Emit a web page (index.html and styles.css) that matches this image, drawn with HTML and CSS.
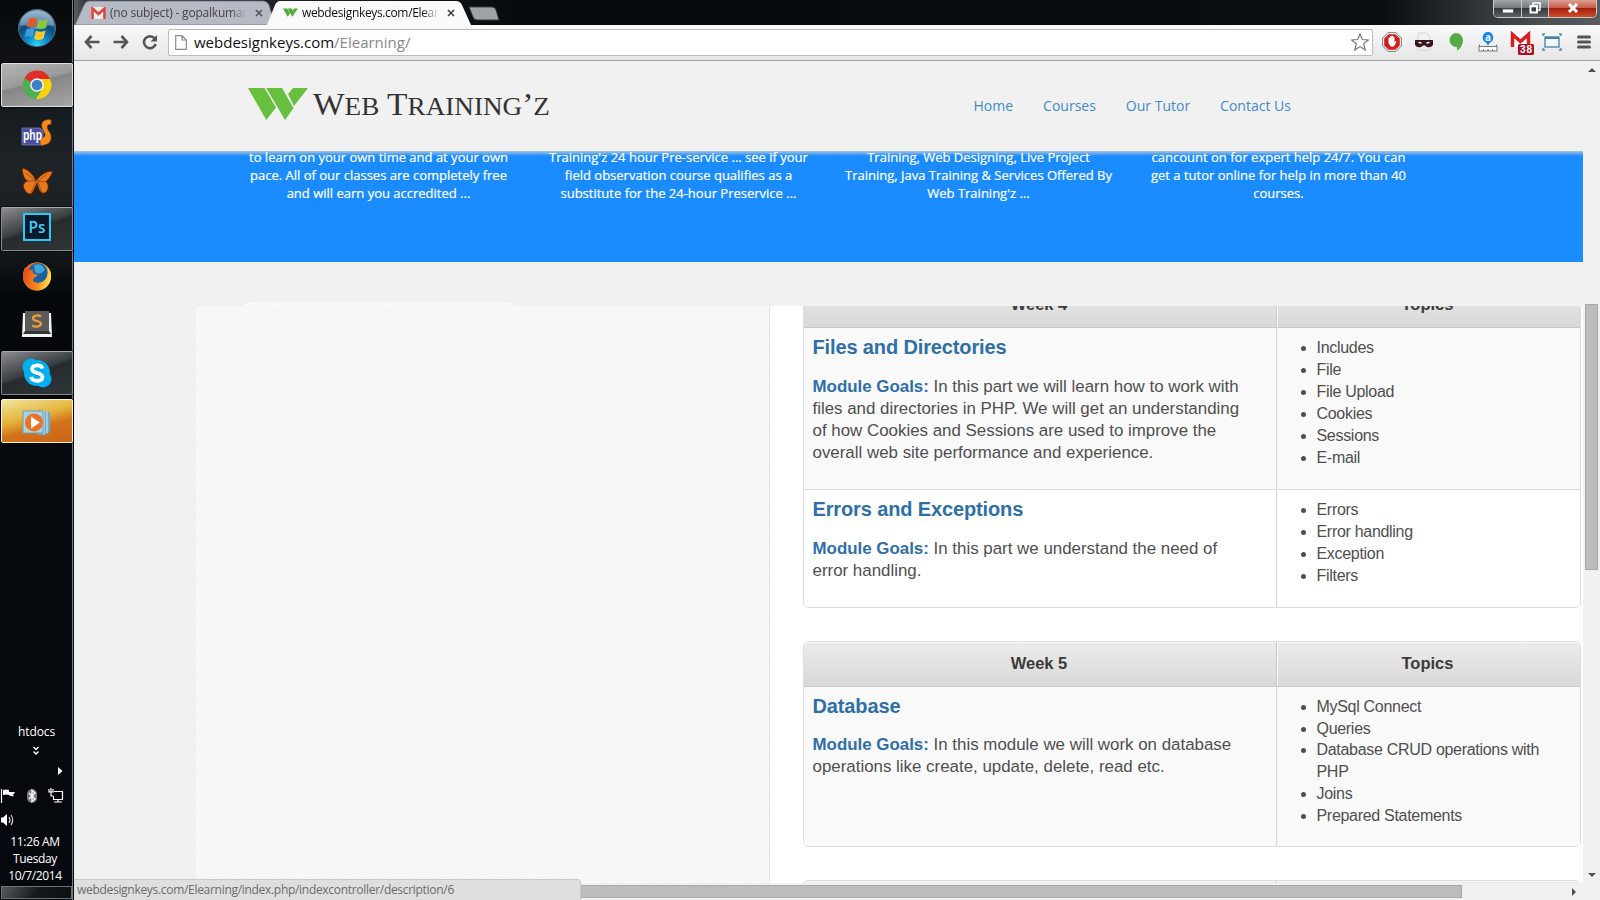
FILE: index.html
```html
<!DOCTYPE html>
<html lang="en">
<head>
<meta charset="utf-8">
<title>webdesignkeys.com/Elearning</title>
<link rel="stylesheet" href="styles.css">
</head>
<body>
<div class="desktop">
  <aside class="taskbar">
    <div class="start">
      <svg width="40" height="40" viewBox="0 0 40 40">
        <defs>
          <radialGradient id="orb" cx=".5" cy="1" r=".95"><stop offset="0" stop-color="#2fe0ff"/><stop offset=".3" stop-color="#0b8fd0"/><stop offset=".65" stop-color="#0d4a7a"/><stop offset="1" stop-color="#7fa0b8"/></radialGradient>
        </defs>
        <circle cx="20" cy="20" r="18.500" fill="url(#orb)" stroke="#4d6f86" stroke-width="1"/>
        <path d="M3 18C4 8 11 3 20 3s16 5 17 15c-8-3-13 4-19 3S8 15 3 18z" fill="#b9d3e3" opacity=".45"/>
        <path d="M12 11q4-3 8 0l-2 8.500q-4-2-8 0z" fill="#e9562a"/>
        <path d="M21.500 11.500q5 2.500 9.500-.5l-2 9q-5 2-9.500 0z" fill="#8cc63e"/>
        <path d="M9.500 21.500q4-2.500 8 0l-2 8q-4-2.500-8 0z" fill="#3d9de0"/>
        <path d="M19 22.500q4 2.500 9.500 0l-2 8q-5 3-9.500 0z" fill="#fcc62c"/>
      </svg>
    </div>
    <ul class="apps">
      <li class="app app-open app-active">
        <svg width="30" height="30" viewBox="0 0 30 30">
          <circle cx="15" cy="15" r="14" fill="#4caf50"/>
          <path d="M15 15 2.500 8.500A14 14 0 0 1 28 9H15z" fill="#e12d27"/>
          <path d="M15 9h13A14 14 0 0 1 14 29l7-11z" fill="#fdd20a"/>
          <circle cx="15" cy="15" r="6.800" fill="#eef3f8"/><circle cx="15" cy="15" r="5.300" fill="#3b7fcb"/>
        </svg>
      </li>
      <li class="app">
        <svg width="32" height="30" viewBox="0 0 32 30">
          <path d="M1 10h18l3 3v14H1z" fill="#4a4fa3" stroke="#8286c4" stroke-width=".7"/>
          <path d="M30 2c-7-1-10 2-9 7 1 4 4 6 3 9-1 2-3 3-5 3l1 6c6 0 10-2 10-8 0-5-4-6-4-10 0-2 2-3 4-3z" fill="#f58a1c" stroke="#c95d0a" stroke-width=".6"/>
          <text x="2" y="22" class="php-label" textLength="19" lengthAdjust="spacingAndGlyphs">php</text>
        </svg>
      </li>
      <li class="app">
        <svg width="34" height="30" viewBox="0 0 34 30">
          <path d="M16 14C13 7 7 3 2 1.500c0 6 1 11 5 13.500-3 1-5 4-3.500 7C5 26 8 29 11.500 28c2.500-2 3.500-6 5.500-10 1 4 2 9 6 9.500 4 0 5.500-4 5.500-7.500 0-2-1-3-2-4.500C29.500 13 32 9 33 5c-6-.5-12 3-17 9z" fill="#e87a1d" stroke="#4a2108" stroke-width="1.300"/>
          <path d="M7 15l9 0 11 1M16 16l-5 11M18 16l4 11M16 15 6 7M18 15l9-7" stroke="#8a4210" fill="none" stroke-width=".7"/>
        </svg>
      </li>
      <li class="app app-open app-ps">
        <svg width="28" height="28" viewBox="0 0 28 28">
          <rect x="1" y="1" width="26" height="26" fill="#0a1a2c" stroke="#26c9f7" stroke-width="2"/>
          <text x="5.500" y="20" class="ps-label" textLength="17" lengthAdjust="spacingAndGlyphs">Ps</text>
        </svg>
      </li>
      <li class="app">
        <svg width="30" height="30" viewBox="0 0 30 30">
          <defs><linearGradient id="fox" x1="0" x2="1" y1=".2" y2=".4"><stop offset="0" stop-color="#e8491d"/><stop offset=".6" stop-color="#f28a1e"/><stop offset="1" stop-color="#fde04c"/></linearGradient></defs>
          <circle cx="15" cy="14.500" r="14" fill="#f28a1e"/>
          <circle cx="15" cy="14.500" r="14" fill="url(#fox)"/>
          <circle cx="16" cy="11" r="10" fill="#1d5f9f"/>
          <path d="M12 3q8-3 11 5-5 6-10 2z" fill="#3ba6dc"/>
          <path d="M3 5l2 4q3-2 6-1-1 3 2 4l3 1-4 3q-2 2 0 4 6 3 11-2 5-7 1-14 6 4 5 12-2 9-12 11Q3 27 1 16 1 9 3 5z" fill="url(#fox)"/>
        </svg>
      </li>
      <li class="app app-sublime">
        <svg width="32" height="30" viewBox="0 0 32 30">
          <path d="M2 4h28l1 24H1z" fill="#f3f3f3"/><path d="M4 2h24v20H4z" fill="#5b5b5b"/><path d="M4 22h24l2 3H2z" fill="#343434"/>
          <path d="M20 7.500c-3-2-8-1-8 2s8 2 8 5-5 4-9 2" fill="none" stroke="#f09a3a" stroke-width="2.300"/>
        </svg>
      </li>
      <li class="app app-open">
        <svg width="32" height="32" viewBox="0 0 32 32">
          <circle cx="10" cy="10" r="8.500" fill="#00aff0"/><circle cx="22" cy="22" r="8.500" fill="#00aff0"/><circle cx="16" cy="16" r="13" fill="#00aff0"/>
          <path d="M21.500 11.500C20 7 11 7.500 11 12c0 5 10.500 3 10.500 8 0 5-10 5-11.500 0" fill="none" stroke="#fff" stroke-width="3.800"/>
        </svg>
      </li>
      <li class="app app-open app-alert">
        <svg width="32" height="30" viewBox="0 0 32 30">
          <path d="M17 2l12 2v20l-5 3H17z" fill="#6fa9c5"/><path d="M26 3v22M23 3v23" stroke="#d8eef7"/>
          <path d="M2 3h20v22H2z" fill="#a9d2e4" stroke="#6ca1bb"/>
          <circle cx="13" cy="14.500" r="9" fill="#f06f20"/><path d="M10 8.500v12l9-6z" fill="#fff"/>
        </svg>
      </li>
    </ul>
    <div class="tray">
      <div class="tray-label">htdocs</div>
      <svg class="tray-more" width="8" height="10" viewBox="0 0 8 10"><path d="M1.500 1 4 3.500 6.500 1M1.500 5.500 4 8l2.500-2.500" fill="none" stroke="#fff" stroke-width="1.400"/></svg>
      <svg class="tray-arrow" width="5" height="8" viewBox="0 0 5 8"><path d="M0 0v8l4.500-4z" fill="#fff"/></svg>
      <div class="tray-icons">
        <svg width="16" height="16" viewBox="0 0 16 16"><path d="M1.500 1v14" stroke="#fff" stroke-width="1.200"/><path d="M3 2q3-1 6 0v2h6l-2 3 1 1q-3 1-5-1-2-1-6 0z" fill="#fff"/></svg>
        <svg width="12" height="16" viewBox="0 0 12 16"><rect x="1" y="1" width="10" height="14" rx="5" fill="#77797b"/><path d="M3 5l6 6-3 2.500V2.500L9 5l-6 6" fill="none" stroke="#fff" stroke-width="1.300"/></svg>
        <svg width="16" height="16" viewBox="0 0 16 16"><path d="M6 3.500h8.500v8H5.500V8M6 14h8M10 12v2M1 1v3h4V1M3 0v8h2" fill="none" stroke="#fff" stroke-width="1.200"/></svg>
      </div>
      <svg class="tray-sound" width="16" height="14" viewBox="0 0 16 14"><path d="M1 4.500h2L7 1v12L3 9.500H1z" fill="#fff"/><path d="M9 4q2 3 0 6M11 2q3.500 5 0 10" fill="none" stroke="#d5d8da" stroke-width="1.200"/></svg>
      <div class="clock"><div>11:26 AM</div><div>Tuesday</div><div>10/7/2014</div></div>
    </div>
    <div class="show-desktop"></div>
  </aside>

  <main class="browser">
    <header class="tabstrip">
      <div class="tab tab-back">
        <svg class="tab-shape" width="200" height="25" viewBox="0 0 200 25"><path d="M0 25 9 5q2-4 5-4h174q4 0 6 4l6 20z" fill="#b5bac4" stroke="#6e737c" stroke-width=".8"/></svg>
        <svg class="tab-icon" width="15" height="12" viewBox="0 0 15 12"><rect width="15" height="12" fill="#f1e9e8"/><path d="M1.500 12V1.500l6 5.500 6-5.500V12" fill="none" stroke="#d9473c" stroke-width="2.600"/></svg>
        <span class="tab-title title-mail">(no subject) - gopalkumar</span>
        <svg class="tab-close" width="8" height="8" viewBox="0 0 8 8"><path d="M1 1l6 6M7 1 1 7" stroke="#555" stroke-width="1.700"/></svg>
      </div>
      <div class="tab tab-front">
        <svg class="tab-shape" width="204" height="25" viewBox="0 0 204 25"><path d="M0 25 8 5q2-4 5-4h176q4 0 6 4l9 20z" fill="#fafafa"/></svg>
        <svg class="tab-icon" width="15" height="9" viewBox="0 0 60 33"><path d="M0 0h17l11 19-9 14zM19 0h16l11 20-9 13zM40 6l4-6h16L46 19z" fill="#4cae33"/></svg>
        <span class="tab-title title-site">webdesignkeys.com/Elearning</span>
        <svg class="tab-close" width="8" height="8" viewBox="0 0 8 8"><path d="M1 1l6 6M7 1 1 7" stroke="#444" stroke-width="1.700"/></svg>
      </div>
      <svg class="new-tab" width="32" height="15" viewBox="0 0 32 15"><path d="M1 1h23q3 0 4 3l3 10H9q-3 0-4-3z" fill="#9fa2a6" stroke="#3a3d40"/></svg>
      <div class="window-buttons">
        <span class="wb wb-min"><svg width="12" height="6" viewBox="0 0 12 6"><rect x=".5" y="1" width="11" height="4" fill="#fff" stroke="#555b63"/></svg></span>
        <span class="wb wb-max"><svg width="12" height="12" viewBox="0 0 12 12"><path d="M4 3V1h7v7H9" fill="none" stroke="#fff" stroke-width="1.500"/><rect x="1.500" y="4" width="6.500" height="6.500" fill="none" stroke="#fff" stroke-width="2"/></svg></span>
        <span class="wb wb-close"><svg width="12" height="10" viewBox="0 0 12 10"><path d="M2 1l8 8M10 1 2 9" stroke="#fff" stroke-width="3"/></svg></span>
      </div>
    </header>

    <nav class="toolbar">
      <svg class="nav-icon" width="16" height="14" viewBox="0 0 16 14"><path d="M7.500 1 2 7l5.500 6M2 7h13.500" fill="none" stroke="#555" stroke-width="2.600"/></svg>
      <svg class="nav-icon" width="16" height="14" viewBox="0 0 16 14"><path d="M8.500 1 14 7l-5.500 6M14 7H.5" fill="none" stroke="#555" stroke-width="2.600"/></svg>
      <svg class="nav-icon" width="16" height="16" viewBox="0 0 16 16"><path d="M12.600 4.300A6 6 0 1 0 13.700 10" fill="none" stroke="#555" stroke-width="2.500"/><path d="M15 1v6.500H8.500z" fill="#555"/></svg>
      <div class="omnibox">
        <svg width="12" height="15" viewBox="0 0 12 15"><path d="M.7.7H7l4.300 4.300v9.300H.7zM7 .7V5h4.300" fill="#fff" stroke="#8a8a8a" stroke-width="1.200"/></svg>
        <span class="url">webdesignkeys.com<i>/Elearning/</i></span>
        <svg class="star" width="18" height="18" viewBox="0 0 18 18"><path d="M9 1l2.300 5.500 6 .5-4.600 3.900 1.500 6L9 13.600 3.800 17l1.500-6L.7 7l6-.5z" fill="#fff" stroke="#777" stroke-width="1.200"/></svg>
      </div>
      <div class="extensions">
        <span><svg width="20" height="20" viewBox="0 0 20 20"><path d="M6 .7h8L19.300 6v8L14 19.300H6L.7 14V6z" fill="#fff" stroke="#777" stroke-width="1"/><path d="M6.600 2.200h6.800l4.400 4.400v6.800l-4.400 4.400H6.600l-4.400-4.400V6.600z" fill="#d8191c"/><path d="M6.500 11V6q.8-1 1.500 0v3V4.500q.8-1 1.500 0V9 4q.8-1 1.500 0v5-4q.8-1 1.500 0v5l1.200-1q1 .2.500 1L12 14.500H8.500z" fill="#fff"/></svg></span>
        <span><svg width="20" height="20" viewBox="0 0 20 20"><path d="M4 1h9l3 4v13H4z" fill="#f1f1f3" stroke="#d4d4d8"/><path d="M1 8h18v5q-2 3-6 2l-3-2-3 2q-4 1-6-2z" fill="#3c1518"/><path d="M4 10.500q2-1.500 4 .5-2 1.500-4-.5zM12 11q2-2 4-.5-2 2-4 .5z" fill="#fff"/></svg></span>
        <span><svg width="16" height="20" viewBox="0 0 16 20"><path d="M8 1a7 7 0 0 1 7 7c0 5-3 9-6 10.500V15A7 7 0 0 1 8 1z" fill="#55ab43"/></svg></span>
        <span><svg width="20" height="21" viewBox="0 0 20 21"><path d="M10 0a5.500 5.500 0 0 1 2 10.500l-2 3-2-3A5.500 5.500 0 0 1 10 0z" fill="#1683ee"/><text x="7" y="8.500" class="ext-a">a</text><rect x="1" y="14.500" width="18" height="4.500" fill="#fff" stroke="#777"/><path d="M1.500 14v-1.500M18.500 14v-1.500M5.500 19v-2M10 19v-2M14.500 19v-2" stroke="#777"/></svg></span>
        <span class="ext-mail"><svg width="25" height="24" viewBox="0 0 25 24"><rect x="1" y="2" width="19" height="14" fill="#fff"/><path d="M2.500 16V3.500l8 7 8-7V16" fill="none" stroke="#dd1e1e" stroke-width="3.500"/><rect x="8" y="13" width="16" height="11" rx="1.500" fill="#b0101f"/><text x="10" y="22" class="ext-count" textLength="12">38</text></svg></span>
        <span><svg width="20" height="18" viewBox="0 0 20 18"><rect x="3" y="4" width="14" height="10" fill="#f2f6f9" stroke="#4480ab" stroke-width="1.300"/><path d="M3 5h14" stroke="#4480ab" stroke-width="2"/><path d="M1 3V1h2M17 1h2v2M19 15v2h-2M3 17H1v-2" fill="none" stroke="#4480ab" stroke-width="1.300"/></svg></span>
        <span><svg width="14" height="14" viewBox="0 0 14 14"><path d="M1.500 2h11M1.500 7h11M1.500 12h11" stroke="#555" stroke-width="3" stroke-linecap="round"/></svg></span>
      </div>
    </nav>

    <div class="frame">
      <div class="viewport">
        <header class="site-header">
          <svg class="logo" width="305" height="36" viewBox="0 0 305 36">
            <path d="M0 1h16.500L28 20.500 18.300 33zM18.300 1H34l11.500 20L37 33zM40 7l5-6h15L46 19z" fill="#67bf3e"/>
            <text x="65" y="28" class="logo-text" textLength="237" lengthAdjust="spacingAndGlyphs">W<tspan class="logo-small">EB</tspan> T<tspan class="logo-small">RAINING</tspan>’<tspan class="logo-small">Z</tspan></text>
          </svg>
          <ul class="menu"><li>Home</li><li>Courses</li><li>Our Tutor</li><li>Contact Us</li></ul>
        </header>
        <section class="features">
          <p>to learn on your own time and at your own<br>pace. All of our classes are completely free<br>and will earn you accredited ...</p>
          <p>Training'z 24 hour Pre-service ... see if your<br>field observation course qualifies as a<br>substitute for the 24-hour Preservice ...</p>
          <p>Training, Web Designing, Live Project<br>Training, Java Training &amp; Services Offered By<br>Web Training'z ...</p>
          <p>cancount on for expert help 24/7. You can<br>get a tutor online for help in more than 40<br>courses.</p>
        </section>
        <div class="gap"><div class="card-top"></div></div>
        <section class="content">
          <div class="side-panel"></div>
          <div class="course">
            <div class="week week-first">
              <div class="th">Week 4</div><div class="th">Topics</div>
              <div class="td shade row-files"><h3>Files and Directories</h3><p><b>Module Goals:</b> In this part we will learn how to work with<br>files and directories in PHP. We will get an understanding<br>of how Cookies and Sessions are used to improve the<br>overall web site performance and experience.</p></div>
              <div class="td shade"><ul><li>Includes</li><li>File</li><li>File Upload</li><li>Cookies</li><li>Sessions</li><li>E-mail</li></ul></div>
              <div class="td row-errors"><h3>Errors and Exceptions</h3><p><b>Module Goals:</b> In this part we understand the need of<br>error handling.</p></div>
              <div class="td"><ul><li>Errors</li><li>Error handling</li><li>Exception</li><li>Filters</li></ul></div>
            </div>
            <div class="week week-full">
              <div class="th">Week 5</div><div class="th">Topics</div>
              <div class="td shade row-db"><h3>Database</h3><p><b>Module Goals:</b> In this module we will work on database<br>operations like create, update, delete, read etc.</p></div>
              <div class="td shade topics-db"><ul><li>MySql Connect</li><li>Queries</li><li>Database CRUD operations with<br>PHP</li><li>Joins</li><li>Prepared Statements</li></ul></div>
            </div>
            <div class="week week-full"><div class="th"></div><div class="th"></div></div>
          </div>
        </section>
      </div>
      <div class="vbar"><i class="arrow up"></i><div class="vthumb"></div><i class="arrow down"></i></div>
      <div class="hbar"><div class="hthumb"></div><i class="arrow right"></i></div>
      <div class="status"><span>webdesignkeys.com/Elearning/index.php/indexcontroller/description/6</span></div>
    </div>
  </main>
</div>
</body>
</html>
```

FILE: styles.css
```css
* { box-sizing: border-box; }
body { margin: 0; font-family: "Open Sans", "Noto Sans", sans-serif; overflow: hidden; }
ul { list-style: none; margin: 0; padding: 0; }
p, h3 { margin: 0; }
svg { display: block; flex: none; }

.desktop { display: flex; width: 1600px; height: 900px; overflow: hidden; }

/* Taskbar */
.taskbar { width: 74px; flex: none; display: flex; flex-direction: column; color: #fff; background: linear-gradient(#06090c, #1d2327 18%, #1b2024 25%, #04080b 33%, #070b0f 55%, #05090d); border-right: 1px solid #05080a; box-shadow: inset -1px 0 #74818b; }
.start { height: 63px; padding: 8px 0 0 17px; }
.apps { display: flex; flex-direction: column; gap: 4px; padding: 0 0 0 1px; }
.app { height: 44px; display: flex; align-items: center; justify-content: center; border-radius: 2px; }
.app-open { border: 1px solid #85898b; border-top-color: #a8aaab; background: linear-gradient(160deg, #8b8d8f, #3a3f42 45%, #262b2e 50%, #303538); box-shadow: 0 0 0 1px #0008; }
.app-active { border-color: #e0e0e0; background: linear-gradient(165deg, #b5b5b5, #9a9a9a 42%, #868686 46%, #a5a5a5); }
.app-alert { border-color: #fff3c0; padding-top: 3px; background: linear-gradient(165deg, #f2e6a0, #e4b53c 40%, #d2731c 62%, #c9641a); }
.app-ps { padding-bottom: 4px; }
.app-sublime { padding-bottom: 3px; }
.php-label { font: bold 14px "Liberation Sans", sans-serif; fill: #fff; }
.ps-label { font: 600 16px "Open Sans", sans-serif; fill: #3fd0fb; }
.tray { margin-top: auto; display: flex; flex-direction: column; height: 162px; }
.tray-label { font-size: 12px; line-height: 16px; text-align: center; letter-spacing: -.1px; }
.tray-more { margin: 6px 0 0 32px; }
.tray-arrow { margin: 11px 0 0 58px; }
.tray-icons { display: flex; justify-content: space-between; padding: 0 9px 0 0; margin-top: 13px; }
.tray-sound { margin-top: 9px; }
.clock { font-size: 12px; line-height: 17px; text-align: center; padding-right: 3px; margin-top: 6px; letter-spacing: -.35px; }
.clock div { white-space: nowrap; }
.show-desktop { height: 13px; margin: 0 1px 1px 1px; border: 1px solid #6b7377; background: linear-gradient(120deg, #555a5d, #15191c 50%, #0b0f12); }

/* Browser chrome */
.browser { flex: 1; min-width: 0; display: flex; flex-direction: column; }
.tabstrip { height: 25px; display: flex; align-items: flex-start; background: linear-gradient(90deg, #5b5f63, #30353a 12px, #05090c 30%, #0b0f12 86%, #4a4d50 96%, #5a5d60); }
.tab { position: relative; height: 25px; display: flex; align-items: center; }
.tab > * { position: relative; }
.tab .tab-shape { position: absolute; left: 0; top: 0; }
.tab-back { width: 200px; padding-left: 16px; margin-left: 1px; }
.tab-front { width: 204px; margin-left: -8px; padding-left: 16px; }
.tab-title { font-size: 12px; line-height: 18px; letter-spacing: -.35px; white-space: nowrap; overflow: hidden; -webkit-mask-image: linear-gradient(90deg, #000 88%, transparent); mask-image: linear-gradient(90deg, #000 88%, transparent); }
.title-mail { width: 137px; margin-left: 4px; color: #444; letter-spacing: -.2px; }
.title-site { width: 137px; margin-left: 4px; color: #111; }
.tab-close { margin-left: 8px; }
.new-tab { margin: 6px 0 0 -3px; }
.window-buttons { margin-left: auto; margin-right: 3px; display: flex; height: 18px; border: 1px solid #c5c8cb; border-top: 0; border-radius: 0 0 5px 5px; overflow: hidden; }
.wb { display: flex; align-items: center; justify-content: center; background: linear-gradient(#a3a7aa, #75797d 45%, #34383c 50%, #5c6165); border-right: 1px solid #c5c8cb; }
.wb-min { width: 28px; padding-top: 4px; }
.wb-max { width: 27px; padding-bottom: 2px; }
.wb-close { width: 47px; border: 0; padding-bottom: 2px; background: linear-gradient(#dba092, #c55e48 45%, #a3200f 50%, #cf4d2a); }

.toolbar { height: 36px; display: flex; align-items: center; background: linear-gradient(#fafafa, #e6e6e6); border-bottom: 1px solid #a0a0a0; padding: 0 0 1px 10px; }
.nav-icon { margin-right: 13px; }
.omnibox { height: 27px; width: 1205px; margin-left: -3px; display: flex; align-items: center; background: #fff; border: 1px solid #bcbcbc; border-radius: 2px; padding: 0 3px 0 6px; }
.url { font-size: 15px; margin-left: 7px; line-height: 22px; letter-spacing: 0; color: #111; }
.url i { font-style: normal; color: #888; }
.star { margin-left: auto; }
.extensions { display: flex; align-items: center; margin-left: 3px; }
.extensions span { width: 32px; height: 26px; display: flex; align-items: center; justify-content: center; }
.extensions .ext-mail { padding: 2px 0 0 5px; }
.ext-a { font: bold 10px "Open Sans", sans-serif; fill: #fff; }
.ext-count { font: bold 10px "Liberation Sans", sans-serif; fill: #fff; }

/* Page frame */
.frame { flex: 1; min-height: 0; position: relative; display: grid; grid-template: 822px 17px / 1509px 17px; background: #f1f1f1; }
.viewport { overflow: hidden; background: #f1f1f1; display: flex; flex-direction: column; }
.site-header { height: 90px; flex: none; display: flex; align-items: flex-start; }
.logo { margin: 26px 0 0 174px; }
.logo-text { font: 32px "Liberation Serif", serif; fill: #333; }
.logo-small { font-size: 26px; }
.menu { display: flex; gap: 30px; margin: 35px 0 0 420.500px; font-size: 14px; line-height: 20px; color: #428bca; white-space: nowrap; }
.features { height: 111px; flex: none; display: grid; grid-template-columns: repeat(4, 300px); padding-left: 154.500px; overflow: hidden; background: linear-gradient(#a9c4df, #1a8cff 5px); }
.features p { margin-top: -3px; font-size: 13px; line-height: 18px; text-align: center; color: #fff; white-space: nowrap; -webkit-text-stroke: .2px #fff; }
.gap { height: 44px; flex: none; display: flex; align-items: flex-end; padding-left: 170px; }
.card-top { width: 270px; height: 4px; background: #f9f9f9; border-radius: 10px 10px 0 0 / 4px 4px 0 0; }
.content { flex: 1; min-height: 0; margin-left: 122px; display: flex; background: #fff; overflow: hidden; }
.side-panel { width: 574px; flex: none; background: repeating-linear-gradient(135deg, #f6f6f6 0 2px, #f8f8f8 2px 4px); border-right: 1px solid #e5e5e5; }
.course { padding-left: 33px; display: flex; flex-direction: column; gap: 33px; font-family: "Liberation Sans", Arial, sans-serif; color: #4f4f4f; }
.week { width: 778px; flex: none; display: grid; grid-template-columns: 472px 1fr; border: 1px solid #dcdcdc; border-radius: 5px; overflow: hidden; }
.week-first { margin-top: -24px; }
.th { height: 45px; display: flex; align-items: center; justify-content: center; padding: 0 2px 1px 0; font-size: 16.500px; font-weight: bold; color: #3a3a3a; background: linear-gradient(#ececec, #d8d8d8); border-bottom: 1px solid #c8c8c8; box-shadow: inset 0 1px #fafafa; }
.th:nth-child(even) { border-left: 1px solid #c9c9c9; box-shadow: inset 1px 1px #fafafa; }
.td:nth-child(even) { border-left: 1px solid #d9d9d9; box-shadow: inset 1px 0 #f3f3f3; }
.td { padding: 8px 8px 0 8.500px; background: #fff; border-bottom: 1px solid #dcdcdc; }
.td:nth-last-child(-n+2) { border-bottom: 0; }
.td.shade { background: #f9f9f9; }
.row-files { height: 162px; }
.row-errors { height: 117px; }
.row-db { height: 159px; }
.td h3 { font-size: 20px; line-height: 22px; letter-spacing: -.13px; color: #2f6fa7; white-space: nowrap; }
.td p { margin-top: 18px; font-size: 16.900px; line-height: 22px; white-space: nowrap; }
.row-db p { margin-top: 17px; }
.td b { color: #2f6fa7; }
.td ul { padding: 1px 0 0 31px; font-size: 16px; line-height: 22px; letter-spacing: -.3px; list-style: disc; white-space: nowrap; }
.topics-db li:nth-child(-n+2) { line-height: 21.500px; }

/* Scrollbars and status bubble */
.vbar { display: flex; flex-direction: column; align-items: center; background: #f1f1f1; }
.vthumb { width: 13px; height: 266px; margin-top: 232px; background: #bcbcbc; border: 1px solid #a8a8a8; }
.arrow { border: 4px solid transparent; }
.up { margin-top: 3px; border-bottom-color: #505050; }
.down { margin-top: auto; margin-bottom: 2px; border-top-color: #505050; }
.hbar { display: flex; align-items: center; background: #f1f1f1; }
.hthumb { width: 888px; height: 13px; margin-left: 500px; background: #bcbcbc; border: 1px solid #a8a8a8; }
.right { margin-left: auto; margin-right: 3px; border-left-color: #505050; }
.status { position: absolute; left: 0; bottom: 0; width: 507px; height: 21px; padding: 1px 3px; border: 1px solid #c8c8c8; border-width: 1px 1px 0 0; border-radius: 0 4px 0 0; background: #dfdfdf; font-size: 12px; line-height: 17px; letter-spacing: -.3px; color: #6b6b6b; white-space: nowrap; }
```
